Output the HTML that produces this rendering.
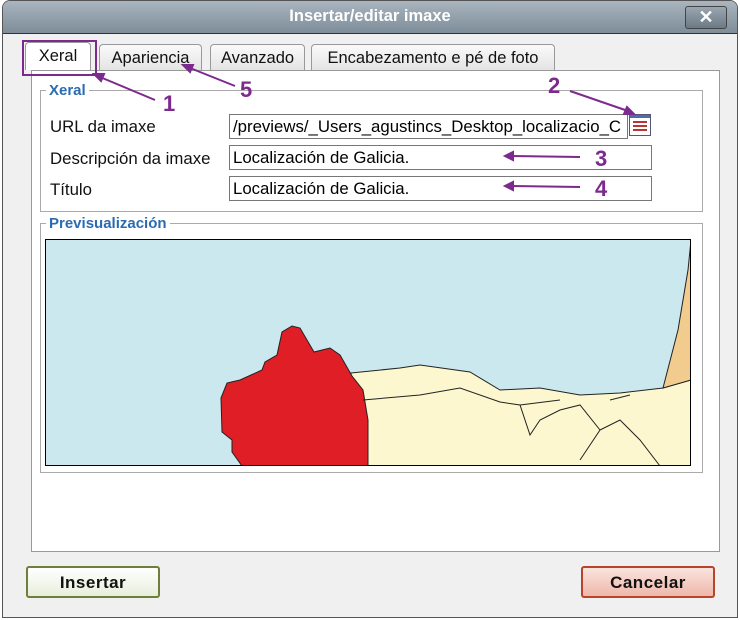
<!DOCTYPE html>
<html><head><meta charset="utf-8"><style>
body{margin:0;width:740px;height:620px;overflow:hidden;background:#fff;font-family:"Liberation Sans",sans-serif;position:relative}
.dlg{position:absolute;left:2px;top:0;width:734px;height:616px;background:#f0f0f0;border:1px solid #555;border-radius:8px 8px 0 0;overflow:hidden}
.title{height:32px;background:linear-gradient(#a9b5bf,#7d8d99);border-bottom:1px solid #333;color:#fff;font-weight:bold;font-size:16.5px;text-align:center;line-height:31px}
.x{position:absolute;right:10px;top:5px;width:40px;height:21px;border:1px solid #444;border-radius:3px;background:linear-gradient(#9aa6b0,#6c7a86);color:#fff;font-weight:bold;text-align:center;line-height:20px;font-size:18px}
.tab{position:absolute;top:44px;height:25px;border:1px solid #999;border-bottom:none;border-radius:4px 4px 0 0;background:linear-gradient(#fafafa,#e4e4e4);font-size:16.5px;line-height:27px;text-align:center;color:#111;white-space:nowrap}
.panel{position:absolute;left:31px;top:70px;width:687px;height:480px;background:#fff;border:1px solid #999}
fieldset{position:absolute;border:1px solid #aaa;margin:0;padding:0}
legend{color:#2b6cb0;font-weight:bold;font-size:15px;padding:0 3px;margin-left:5px}
.lbl{position:absolute;font-size:16.8px;color:#111}
.in{position:absolute;left:229px;width:394px;height:23px;border:1px solid #777;font-size:16.8px;line-height:24px;padding-left:3px;white-space:nowrap;overflow:hidden;background:#fff}
.btn{position:absolute;top:566px;width:130px;height:28px;border-radius:3px;font-weight:bold;font-size:17px;letter-spacing:0.5px;text-align:center;line-height:29px;color:#111}
.an{position:absolute;color:#7d2a8f;font-weight:bold;font-size:22px}
</style></head><body>
<div class="dlg">
<div class="title">Insertar/editar imaxe</div>
<div class="x">✕</div>
</div>
<div class="tab" style="left:25px;width:64px;background:#fff;height:27px;top:42px">Xeral</div>
<div class="tab" style="left:99px;width:101px">Apariencia</div>
<div class="tab" style="left:210px;width:93px">Avanzado</div>
<div class="tab" style="left:311px;width:242px">Encabezamento e pé de foto</div>
<div class="panel"></div>
<fieldset style="left:40px;top:82px;width:661px;height:128px"><legend>Xeral</legend></fieldset>
<div class="lbl" style="left:50px;top:117px">URL da imaxe</div>
<div class="lbl" style="left:50px;top:149px">Descripción da imaxe</div>
<div class="lbl" style="left:50px;top:180px">Título</div>
<div class="in" style="top:114px">/previews/_Users_agustincs_Desktop_localizacio_C</div>
<div class="in" style="top:145px;width:418px">Localización de Galicia.</div>
<div class="in" style="top:176px;width:418px">Localización de Galicia.</div>
<div style="position:absolute;left:629px;top:114px;width:20px;height:20px;border:1px solid #557;background:#fff"><div style="height:3px;background:#4a6fa5"></div><div style="margin:3px 3px;height:10px;background:repeating-linear-gradient(#b33 0 2px,#fff 2px 4px)"></div></div>
<fieldset style="left:40px;top:215px;width:661px;height:256px"><legend>Previsualización</legend></fieldset>
<svg style="position:absolute;left:45px;top:239px" width="646" height="227" viewBox="45 239 646 227">
<rect x="45" y="239" width="646" height="227" fill="#cbe8ef"/>
<path d="M351,373 L400,368 L420,365 L470,372 L500,390 L540,388 L580,395 L620,393 L663,388 L691,380 L691,466 L351,466Z" fill="#fdf7cf" stroke="#222" stroke-width="1"/>
<path d="M663,388 L678,330 L688,270 L691,240 L691,380Z" fill="#f2cc8f" stroke="#222" stroke-width="1"/>
<path d="M314,352 L300,328 L292,326 L282,332 L277,355 L265,362 L262,370 L240,380 L227,383 L221,398 L222,432 L232,440 L232,452 L242,466 L368,466 L368,420 L363,390 L352,376 L340,355 L330,348Z" fill="#e01e26" stroke="#222" stroke-width="1"/>
<path d="M363,400 L420,395 L460,388 L500,402 L520,405 L530,435 L540,420 L560,410 L580,405 L600,430 L580,460 M600,430 L620,420 L640,440 L660,466 M520,405 L560,400 M610,400 L630,395" fill="none" stroke="#222"/>
<rect x="45.5" y="239.5" width="645" height="226" fill="none" stroke="#000"/>
</svg>
<div class="btn" style="left:26px;border:2px solid #6d7f3a;background:linear-gradient(#fff,#e8eedc)">Insertar</div>
<div class="btn" style="left:581px;border:2px solid #b7452c;background:linear-gradient(#fbe4de,#eeb7aa)">Cancelar</div>
<div style="position:absolute;left:22px;top:40px;width:71px;height:32px;border:2px solid #7d2a8f"></div>
<svg style="position:absolute;left:0;top:0" width="740" height="620">
<g stroke="#7d2a8f" stroke-width="2" fill="#7d2a8f">
<line x1="155" y1="100" x2="100" y2="77"/><polygon points="94,74 104,74 101,81"/>
<line x1="235" y1="86" x2="190" y2="68"/><polygon points="183,65 193,65 190,72"/>
<line x1="570" y1="91" x2="628" y2="111"/><polygon points="634,114 624,114 627,107"/>
<line x1="580" y1="157" x2="512" y2="156"/><polygon points="505,156 513,152 513,160"/>
<line x1="580" y1="187" x2="512" y2="186"/><polygon points="505,186 513,182 513,190"/>
</g></svg>
<div class="an" style="left:163px;top:91px">1</div>
<div class="an" style="left:240px;top:77px">5</div>
<div class="an" style="left:548px;top:73px">2</div>
<div class="an" style="left:595px;top:146px">3</div>
<div class="an" style="left:595px;top:176px">4</div>
</body></html>
